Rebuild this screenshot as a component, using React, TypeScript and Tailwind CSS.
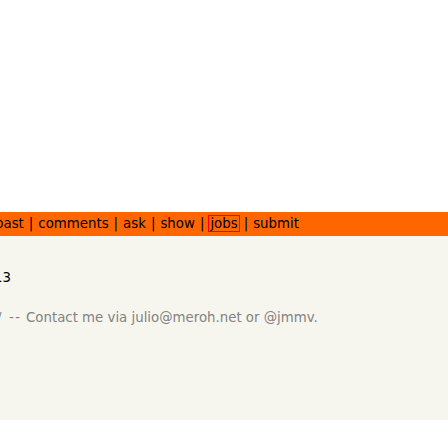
import React from "react";

const font = { fontFamily: '"DejaVu Sans", Verdana, sans-serif' };

export default function App() {
  const links = ["past", "comments", "ask", "show", "jobs", "submit"];
  return (
    <div className="w-[448px] h-[448px] overflow-hidden bg-white" style={font}>
      <div className="h-[212px]" />
      <div className="h-6 bg-[#ff6600] flex items-center text-[13.33px] text-black whitespace-nowrap pl-[4px]">
        <span className="-ml-[9px]">
          {links.map((l, i) => (
            <React.Fragment key={l}>
              {i > 0 && <span className="px-[5px]">|</span>}
              {l === "jobs" ? (
                <span className="outline outline-1 outline-[#ff0000] px-[1px]">{l}</span>
              ) : (
                <span>{l}</span>
              )}
            </React.Fragment>
          ))}
        </span>
      </div>
      <div className="h-[184px] bg-[#f6f6ef] text-[13.33px]">
        <div className="pt-[34px] leading-4 -ml-[6px] text-black">13</div>
        <div className="mt-6 leading-4 -ml-[3px] text-[#828282] whitespace-nowrap">
          <span className="inline-block w-[12px]">/</span>
          <span className="inline-block w-[17px] tracking-[1.5px]">--</span>
          Contact me via julio@meroh.net or @jmmv.
        </div>
      </div>
    </div>
  );
}
